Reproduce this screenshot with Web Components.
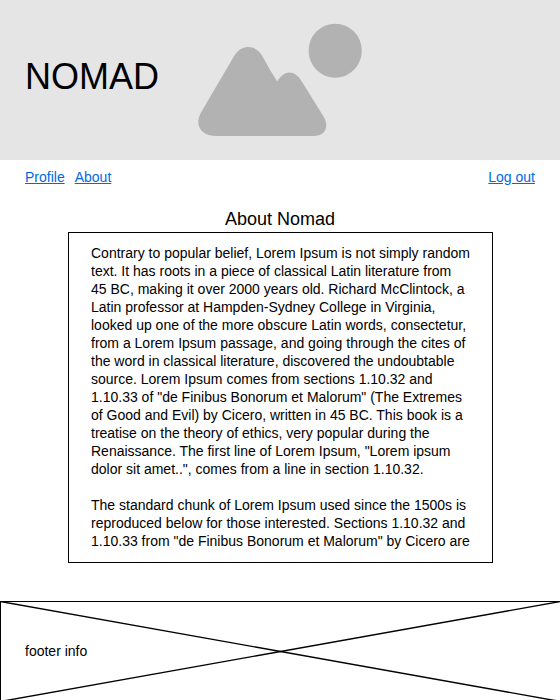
<!DOCTYPE html>
<html lang="en">
<head>
<meta charset="utf-8">
<title>About Nomad</title>
<style>
html, body { margin: 0; height: 700px; overflow: hidden; background: #fff; }
body { font-family: "Liberation Sans", Arial, sans-serif; font-size: 14px; line-height: 18px; color: #000; }
</style>
</head>
<body>
<nomad-page></nomad-page>
<script>
function define(name, html) {
  const template = document.createElement('template');
  template.innerHTML = html;
  customElements.define(name, class extends HTMLElement {
    constructor() {
      super();
      this.attachShadow({ mode: 'open' }).append(template.content.cloneNode(true));
    }
  });
}

define('landscape-logo', `
<style>
:host { display: block; width: 166px; height: 114px; }
svg { display: block; }
</style>
<svg width="166" height="114" viewBox="197 23 166 114" fill="#b2b2b2" aria-hidden="true">
  <ellipse cx="335.2" cy="50.7" rx="26.6" ry="27"/>
  <path d="M201 112.500L231.500 60.500C236 52 241 47 248 47C255 47 260 51 264 59Q270 70.500 277.200 81.500C280 76.500 284.500 72.500 289.500 72.500C294 72.500 298 75.500 301.500 81L323.500 116.500C329 126 326.500 136 313 136H217C200 136 194.500 124.500 201 112.500Z"/>
</svg>`);

define('site-header', `
<style>
:host { display: flex; box-sizing: border-box; height: 160px; padding: 23px 25px 0; background: #e5e5e5; }
h1 { margin: 33px 0 0; width: 172px; font-size: 36px; line-height: 41px; font-weight: 400; }
</style>
<h1><slot></slot></h1><landscape-logo></landscape-logo>`);

define('nav-link', `
<style>
:host { display: block; }
a { color: #0069e6; text-decoration: underline; }
</style>
<a href="#"><slot></slot></a>`);

define('site-nav', `
<style>
:host { display: flex; justify-content: space-between; padding: 8px 25px 0; height: 34px; box-sizing: border-box; }
div { display: flex; gap: 10px; }
</style>
<div><slot></slot></div><slot name="end"></slot>`);

define('text-panel', `
<style>
:host { display: block; padding-top: 15px; }
h2 { margin: 0 0 2px; font-size: 18px; line-height: 21px; font-weight: 400; text-align: center; }
div { box-sizing: border-box; width: 425px; height: 331px; margin-left: 68px; border: 1px solid #000; padding: 11px 22px 0; white-space: pre; overflow: hidden; }
</style>
<h2><slot name="title"></slot></h2><div><slot></slot></div>`);

define('site-footer', `
<style>
:host { display: grid; align-items: center; width: 561px; height: 101px; margin-top: 38px; }
svg, span { grid-area: 1 / 1; }
svg { display: block; }
span { padding-left: 25px; margin-top: -1px; }
</style>
<svg width="561" height="101" fill="none" stroke="#000" aria-hidden="true">
  <rect x=".5" y=".5" width="560" height="100"/>
  <path d="M.5 .5L560.500 100.500M560.500 .5L.5 100.500" stroke-width="1.4"/>
</svg>
<span><slot></slot></span>`);

define('nomad-page', `
<style>
:host { display: flex; flex-direction: column; width: 560px; height: 700px; overflow: hidden; }
site-header, site-nav, text-panel, site-footer { flex: none; }
</style>
<site-header>NOMAD</site-header>
<site-nav><nav-link>Profile</nav-link><nav-link>About</nav-link><nav-link slot="end">Log out</nav-link></site-nav>
<text-panel><span slot="title">About Nomad</span>Contrary to popular belief, Lorem Ipsum is not simply random
text. It has roots in a piece of classical Latin literature from
45 BC, making it over 2000 years old. Richard McClintock, a
Latin professor at Hampden-Sydney College in Virginia,
looked up one of the more obscure Latin words, consectetur,
from a Lorem Ipsum passage, and going through the cites of
the word in classical literature, discovered the undoubtable
source. Lorem Ipsum comes from sections 1.10.32 and
1.10.33 of "de Finibus Bonorum et Malorum" (The Extremes
of Good and Evil) by Cicero, written in 45 BC. This book is a
treatise on the theory of ethics, very popular during the
Renaissance. The first line of Lorem Ipsum, "Lorem ipsum
dolor sit amet..", comes from a line in section 1.10.32.

The standard chunk of Lorem Ipsum used since the 1500s is
reproduced below for those interested. Sections 1.10.32 and
1.10.33 from "de Finibus Bonorum et Malorum" by Cicero are</text-panel>
<site-footer>footer info</site-footer>`);
</script>
</body>
</html>
